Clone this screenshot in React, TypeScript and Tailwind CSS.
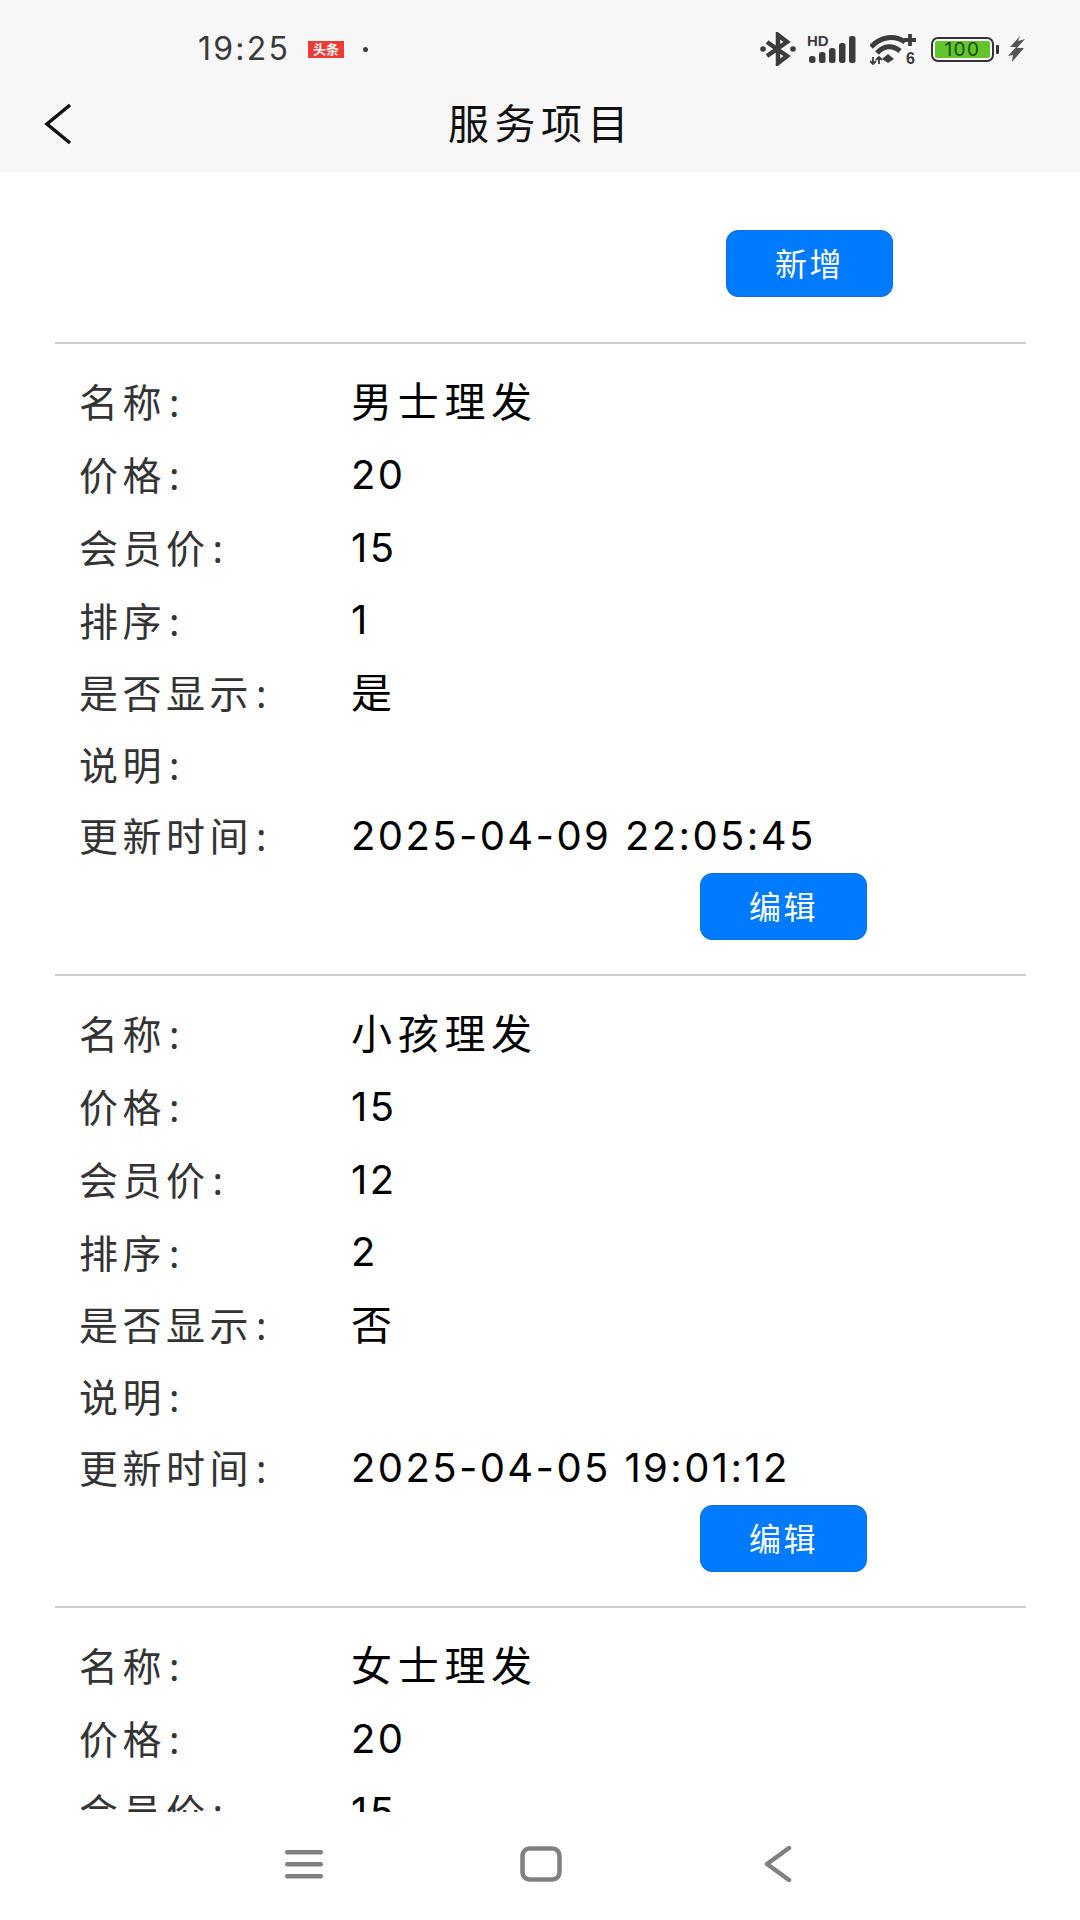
const FONT = "font-['Noto_Sans','Noto_Sans_CJK_SC',sans-serif]";

type Item = { name: string; price: string; member: string; order: string; show: string; time: string };

const items: Item[] = [
  { name: "男士理发", price: "20", member: "15", order: "1", show: "是", time: "2025-04-09 22:05:45" },
  { name: "小孩理发", price: "15", member: "12", order: "2", show: "否", time: "2025-04-05 19:01:12" },
  { name: "女士理发", price: "20", member: "15", order: "3", show: "是", time: "2025-04-05 19:01:12" },
];

function Row({ label, value, h, cjk }: { label: string; value: string; h: string; cjk?: boolean }) {
  return (
    <div className={`flex items-center ${h}`}>
      <div className="w-[296px] pl-[24px] text-[#333333] text-[39px] tracking-[4.5px] leading-none whitespace-nowrap">
        {label}
        <span className="ml-[3px]">:</span>
      </div>
      {cjk ? (
        <div className="text-[#000000] text-[41px] tracking-[5.7px] leading-none">{value}</div>
      ) : (
        <div className="text-[#000000] font-['Inter',sans-serif] text-[40px] tracking-[2.4px] leading-none">{value}</div>
      )}
    </div>
  );
}

function Btn({ text }: { text: string }) {
  return (
    <div className="w-[167px] h-[67px] rounded-[12px] bg-[#007aff] border border-[#0a6fd8] text-white text-[32px] tracking-[2.5px] flex items-center justify-center">
      {text}
    </div>
  );
}

function Card({ item }: { item: Item }) {
  return (
    <div className="border-t-2 border-[#cccccc] pt-[21px] h-[632px] shrink-0">
      <Row label="名称" value={item.name} h="h-[73px]" cjk />
      <Row label="价格" value={item.price} h="h-[73px]" />
      <Row label="会员价" value={item.member} h="h-[73px]" />
      <Row label="排序" value={item.order} h="h-[72px]" />
      <Row label="是否显示" value={item.show} h="h-[73px]" cjk />
      <Row label="说明" value="" h="h-[71px]" />
      <Row label="更新时间" value={item.time} h="h-[71px]" />
      <div className="flex justify-end pr-[159px] mt-[2px]">
        <Btn text="编辑" />
      </div>
    </div>
  );
}

function StatusIcons() {
  return (
    <div className="flex items-center gap-[11px]">
      <svg width="36" height="34" viewBox="0 0 36 34" fill="none">
        <path d="M7 10 L27 24 L18 31 V3 L27 10 L7 24" stroke="#3c3c3c" strokeWidth="4.5" strokeLinejoin="miter" />
        <circle cx="3" cy="17" r="2.8" fill="#3c3c3c" />
        <circle cx="33" cy="17" r="2.8" fill="#3c3c3c" />
      </svg>
      <svg width="52" height="30" viewBox="0 0 52 30">
        <text x="0" y="12" fontSize="15" fontWeight="700" fill="#3c3c3c" fontFamily="Liberation Sans">HD</text>
        <rect x="2" y="22" width="6.5" height="7" rx="2.5" fill="#3c3c3c" />
        <rect x="12" y="18" width="6.5" height="11" rx="2.5" fill="#3c3c3c" />
        <rect x="22" y="14" width="6.5" height="15" rx="2.5" fill="#3c3c3c" />
        <rect x="32" y="9" width="6.5" height="20" rx="2.5" fill="#3c3c3c" />
        <rect x="42" y="2" width="6.5" height="27" rx="2.5" fill="#3c3c3c" />
      </svg>
      <svg width="50" height="32" viewBox="0 0 50 32" fill="none">
        <path d="M1 14 C11 3 25 2 35 9" stroke="#3c3c3c" strokeWidth="5" />
        <path d="M7 20 C14 12 23 12 30 18" stroke="#3c3c3c" strokeWidth="5" />
        <path d="M12 26 L18 21 L24 26 L18 30 Z" fill="#3c3c3c" />
        <path d="M40 1 V13 M34 7 H46" stroke="#3c3c3c" strokeWidth="3.8" />
        <text x="36" y="31" fontSize="16" fontWeight="700" fill="#3c3c3c" fontFamily="Liberation Sans">6</text>
        <path d="M3 24 V31 M0 28 L3 31 L6 28 M9 31 V24 M6 27 L9 24 L12 27" stroke="#3c3c3c" strokeWidth="1.8" />
      </svg>
      <div className="flex items-center gap-[2px]">
        <div className="w-[63px] h-[25px] rounded-[7px] border-[2.5px] border-[#333333] p-[2px] flex">
          <div className="flex-1 bg-[#63c52b] rounded-[2px] text-[#1d4a10] text-[19px] leading-[17px] text-center font-['Inter',sans-serif] tracking-[1.5px]">
            100
          </div>
        </div>
        <div className="w-[3px] h-[9px] bg-[#333333] rounded-[1px]" />
      </div>
      <svg width="17" height="26" viewBox="0 0 17 26" className="-ml-[2px]">
        <path d="M12 0 L2 11 L8 11 L0 20 L5 19 L4 26 L16 12 L9 12 L17 3 L10 5 Z" fill="#555555" />
      </svg>
    </div>
  );
}

export default function App() {
  return (
    <div className={`${FONT} w-[1080px] h-[1920px] bg-white flex flex-col overflow-hidden`}>
      {/* Top bars */}
      <div className="h-[172px] bg-[#f7f7f7] shrink-0 flex flex-col">
        <div className="h-[98px] flex items-center justify-between pl-[198px] pr-[55px]">
          <div className="flex items-center">
            <span className="text-[#3a3a3a] font-['Inter',sans-serif] text-[32px] tracking-[2.2px] leading-none">19:25</span>
            <span className="ml-[18px] w-[36px] h-[17px] bg-[#ee3b35] text-white text-[13px] leading-[17px] text-center font-bold">头条</span>
            <span className="ml-[19px] w-[5px] h-[5px] rounded-full bg-[#3a3a3a]" />
          </div>
          <StatusIcons />
        </div>
        <div className="relative flex-1 flex items-start justify-center">
          <span className="text-[#111111] text-[41px] tracking-[5.5px] leading-none mt-[5px] ml-[2px]">服务项目</span>
          <svg width="30" height="42" viewBox="0 0 30 42" fill="none" className="absolute left-[43px] top-[5px]">
            <path d="M27 2 L4 21 L27 40" stroke="#111111" strokeWidth="3.5" />
          </svg>
        </div>
      </div>

      {/* Scrollable content */}
      <div className="h-[1640px] overflow-hidden shrink-0 pl-[55px] pr-[54px]">
        <div className="flex justify-end pr-[133px] pt-[58px] pb-[45px]">
          <Btn text="新增" />
        </div>
        {items.map((item) => (
          <Card key={item.name} item={item} />
        ))}
      </div>

      {/* Bottom nav */}
      <div className="flex-1 bg-white relative flex justify-center items-center">
        <div className="-ml-[4px] flex -mt-[4px] items-center">
          <svg width="40" height="32" viewBox="0 0 40 32" className="mr-[196px]">
            <rect x="1" y="2" width="38" height="4.5" rx="2.2" fill="#808080" />
            <rect x="1" y="14" width="38" height="4.5" rx="2.2" fill="#808080" />
            <rect x="1" y="26" width="38" height="4.5" rx="2.2" fill="#808080" />
          </svg>
          <svg width="42" height="36" viewBox="0 0 42 36" fill="none" className="mr-[202px]">
            <rect x="2.5" y="2.5" width="37" height="31" rx="7" stroke="#808080" strokeWidth="4.5" />
          </svg>
          <svg width="28" height="36" viewBox="0 0 28 36" fill="none">
            <path d="M25 2 L3 18 L25 34" stroke="#808080" strokeWidth="4.5" strokeLinecap="round" strokeLinejoin="round" />
          </svg>
        </div>
      </div>
    </div>
  );
}
